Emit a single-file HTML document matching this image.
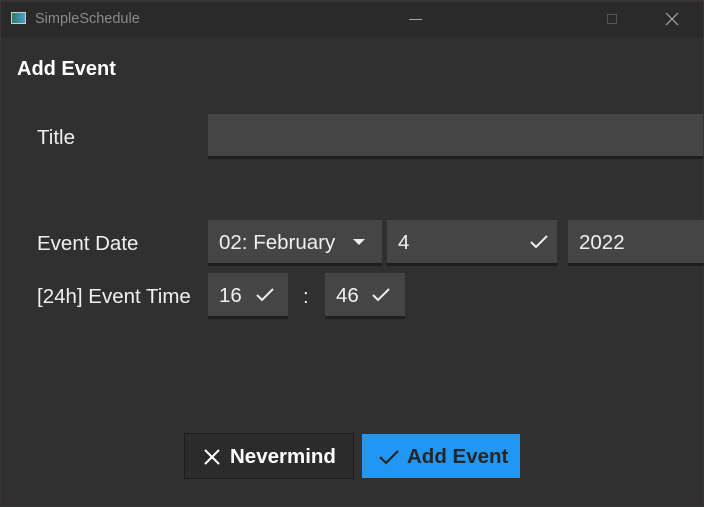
<!DOCTYPE html>
<html><head><style>
*{margin:0;padding:0;box-sizing:border-box}
body{width:704px;height:507px;background:#3a3434;font-family:"Liberation Sans","DejaVu Sans",sans-serif;position:relative;overflow:hidden;color:#f0f0f0}
.win{position:absolute;left:1px;top:2px;width:702px;height:504px;background:#303030}
.tb{position:absolute;left:0;top:0;width:702px;height:36px;background:#2a2a2a}
.abs{position:absolute}
.box{position:absolute;background:#454545;border-bottom:3px solid #1e1e1e;font-size:20.5px;line-height:46px;padding-left:11px;color:#f0f0f0}
.lbl{position:absolute;font-size:20.5px;color:#f0f0f0}
</style></head><body>
<div class="win">
<div class="tb">
<div class="abs" style="left:10px;top:10px;width:15px;height:12px;background:linear-gradient(90deg,#2a7d6a,#4aa0d0);border:1px solid #ccc"></div>
<div class="abs" style="left:34px;top:9px;font-size:14.5px;color:#8a8a8a">SimpleSchedule</div>
<div class="abs" style="left:408px;top:17px;width:13px;height:1px;background:#aaa"></div>
<div class="abs" style="left:606px;top:12px;width:10px;height:10px;border:1px solid #555"></div>
<svg class="abs" style="left:664px;top:10px" width="14" height="14"><path d="M1 1L13 13M13 1L1 13" stroke="#aaa" stroke-width="1.2"/></svg>
</div>
<div class="abs" style="left:16px;top:56px;font-size:20px;font-weight:bold;color:#fff">Add Event</div>
<div class="lbl" style="left:36px;top:124px">Title</div>
<div class="box" style="left:207px;top:112px;width:495px;height:45px"></div>
<div class="lbl" style="left:36px;top:230px">Event Date</div>
<div class="box" style="left:207px;top:218px;width:174px;height:46px">02: February
<svg class="abs" style="left:145px;top:19px" width="12" height="7"><path d="M0 0H12L6 6Z" fill="#eee"/></svg></div>
<div class="box" style="left:386px;top:218px;width:170px;height:46px">4
<svg class="abs" style="left:142px;top:14px" width="20" height="16"><path d="M2 8L7 13L18 2" stroke="#eee" stroke-width="2" fill="none"/></svg></div>
<div class="box" style="left:567px;top:218px;width:140px;height:46px">2022</div>
<div class="lbl" style="left:36px;top:283px">[24h] Event Time</div>
<div class="box" style="left:207px;top:271px;width:80px;height:46px">16
<svg class="abs" style="left:47px;top:14px" width="20" height="16"><path d="M2 8L7 13L18 2" stroke="#eee" stroke-width="2" fill="none"/></svg></div>
<div class="lbl" style="left:302px;top:283px">:</div>
<div class="box" style="left:324px;top:271px;width:80px;height:46px">46
<svg class="abs" style="left:46px;top:14px" width="20" height="16"><path d="M2 8L7 13L18 2" stroke="#eee" stroke-width="2" fill="none"/></svg></div>
<div class="abs" style="left:183px;top:431px;width:170px;height:46px;background:#2b2b2b;border:1px solid #1c1c1c;font-size:20.5px;font-weight:bold;color:#fff;line-height:46px;padding-left:45px">Nevermind
<svg class="abs" style="left:19px;top:15px" width="16" height="16"><path d="M1 1L15 15M15 1L1 15" stroke="#fff" stroke-width="2"/></svg></div>
<div class="abs" style="left:361px;top:432px;width:158px;height:44px;background:#2196f3;font-size:20.5px;font-weight:bold;color:#262626;line-height:46px;padding-left:45px">Add Event
<svg class="abs" style="left:16px;top:15px" width="22" height="16"><path d="M2 8L8 14L20 2" stroke="#262626" stroke-width="2.2" fill="none"/></svg></div>
</div>
</body></html>
